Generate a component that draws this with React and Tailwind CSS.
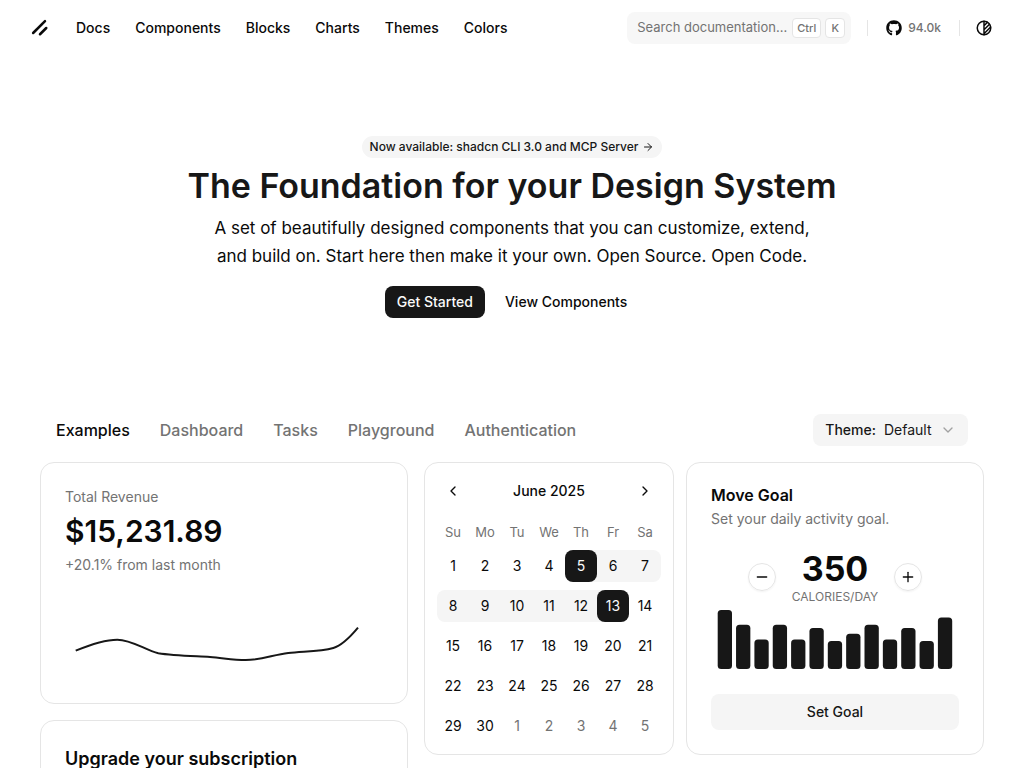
import { useState } from "react";
import { ArrowRight, ChevronDown, ChevronLeft, ChevronRight, Minus, Plus } from "lucide-react";
import { FaGithub } from "react-icons/fa";
import clsx from "clsx";

const NAV = ["Docs", "Components", "Blocks", "Charts", "Themes", "Colors"];
const TABS = ["Examples", "Dashboard", "Tasks", "Playground", "Authentication"];
const WEEKDAYS = ["Su", "Mo", "Tu", "We", "Th", "Fr", "Sa"];
const GOALS = [400, 300, 200, 300, 200, 278, 189, 239, 300, 200, 278, 189, 349];

// June 2025 starts on a Sunday, the last five cells belong to July
const WEEKS = [0, 1, 2, 3, 4].map((w) =>
  WEEKDAYS.map((_, d) => {
    const n = w * 7 + d + 1;
    return { n, label: n > 30 ? n - 30 : n, outside: n > 30 };
  })
);
const RANGE = { from: 5, to: 13 };

function Kbd({ children }) {
  return (
    <kbd className="h-5 px-1 flex items-center justify-center min-w-5 rounded border border-neutral-200 bg-white font-['Inter',sans-serif] text-[11px] font-medium text-neutral-500">
      {children}
    </kbd>
  );
}

function Header() {
  return (
    <header className="flex h-14 items-center px-6">
      <a href="#" aria-label="Home" className="flex size-8 items-center justify-center">
        <svg viewBox="0 0 256 256" className="size-5" fill="none" stroke="currentColor" strokeWidth="32" strokeLinecap="round">
          <line x1="208" y1="128" x2="128" y2="208" />
          <line x1="192" y1="40" x2="40" y2="192" />
        </svg>
      </a>
      <nav className="ml-2 flex items-center gap-px">
        {NAV.map((item) => (
          <a key={item} href="#" className="px-3 text-sm font-medium">
            {item}
          </a>
        ))}
      </nav>
      <div className="ml-auto flex items-center gap-2">
        <button className="mr-2 flex h-8 w-56 items-center justify-between rounded-lg bg-[#f7f7f7] pl-2.5 pr-1.5 text-[13px] text-neutral-500">
          <span className="whitespace-nowrap">Search documentation...</span>
          <span className="flex gap-1">
            <Kbd>Ctrl</Kbd>
            <Kbd>K</Kbd>
          </span>
        </button>
        <div className="h-4 w-px bg-neutral-200" />
        <a href="#" className="flex h-8 items-center gap-1.5 px-2.5 text-xs font-medium text-neutral-500">
          <FaGithub size={16} className="text-neutral-950" /> 94.0k
        </a>
        <div className="h-4 w-px bg-neutral-200" />
        <button aria-label="Toggle theme" className="flex size-8 items-center justify-center">
          <svg viewBox="0 0 24 24" className="size-[18px]" fill="none" stroke="currentColor" strokeWidth="2" strokeLinecap="round" strokeLinejoin="round">
            <circle cx="12" cy="12" r="9" />
            <path d="M12 3v18M12 9l4.65-4.65M12 14.3l7.37-7.37M12 19.6l8.85-8.85" />
          </svg>
        </button>
      </div>
    </header>
  );
}

function Hero() {
  return (
    <section className="flex flex-col items-center px-6 py-20 text-center">
      <a href="#" className="flex h-[22px] items-center gap-1 rounded-full bg-neutral-100 px-2 text-xs font-medium text-neutral-900">
        Now available: shadcn CLI 3.0 and MCP Server <ArrowRight size={12} />
      </a>
      <h1 className="mt-2 text-[34px] leading-10 font-semibold text-neutral-900">
        The Foundation for your Design System
      </h1>
      <p className="mt-2 max-w-[640px] text-[17px] leading-7 text-balance">
        A set of beautifully designed components that you can customize, extend, and build on.
        Start here then make it your own. Open Source. Open Code.
      </p>
      <div className="mt-4 flex gap-2 text-sm font-medium">
        <a href="#" className="flex h-8 items-center rounded-lg bg-neutral-900 px-3 text-neutral-50">
          Get Started
        </a>
        <a href="#" className="flex h-8 items-center rounded-lg px-3">
          View Components
        </a>
      </div>
    </section>
  );
}

function Toolbar() {
  return (
    <div className="flex items-center justify-between px-14 py-4">
      <nav className="flex gap-[30px] font-medium">
        {TABS.map((tab, i) => (
          <a key={tab} href="#" className={i === 0 ? "text-neutral-950" : "text-neutral-500"}>
            {tab}
          </a>
        ))}
      </nav>
      <div className="relative flex h-8 items-center rounded-lg bg-neutral-100 text-sm text-neutral-900">
        <label htmlFor="theme" className="pl-3 font-medium">
          Theme:
        </label>
        <select id="theme" className="h-8 appearance-none bg-transparent pl-2 pr-9 outline-none">
          <option>Default</option>
          <option>Blue</option>
          <option>Green</option>
        </select>
        <ChevronDown size={16} className="pointer-events-none absolute right-3 text-neutral-400" />
      </div>
    </div>
  );
}

function Card({ className, children }) {
  return (
    <div className={clsx("rounded-[14px] border border-neutral-200 bg-white", className)}>
      {children}
    </div>
  );
}

function RevenueCard() {
  return (
    <Card className="p-6">
      <p className="text-sm text-neutral-500">Total Revenue</p>
      <p className="mt-1 text-3xl leading-10 font-semibold">$15,231.89</p>
      <p className="mt-1 text-sm text-neutral-500">+20.1% from last month</p>
      <svg viewBox="0 0 318 80" className="mt-6 w-full" fill="none" stroke="#171717" strokeWidth="2">
        <path d="M10.7 51.7C25 45.7 38.3 40.7 52.3 40.7C66.7 40.7 80 51 93.3 54.3C108.3 56.7 126.7 57 145 58C158.3 59 168.3 61 180.7 61C196.7 61 208.3 55.7 223.3 54C238.3 52.3 255 52.7 268.3 49C276.7 46.7 285 38.3 293 28.7" />
      </svg>
    </Card>
  );
}

function CalendarCard() {
  return (
    <Card className="shrink-0 p-3">
      <div className="flex h-8 items-center justify-between">
        <button aria-label="Previous month" className="flex size-8 items-center justify-center">
          <ChevronLeft size={16} />
        </button>
        <span className="text-sm font-medium">June 2025</span>
        <button aria-label="Next month" className="flex size-8 items-center justify-center">
          <ChevronRight size={16} />
        </button>
      </div>
      <table className="mt-4 text-sm">
        <thead>
          <tr>
            {WEEKDAYS.map((d) => (
              <th key={d} className="p-0 text-[13px] leading-[19px] font-normal text-neutral-500">
                {d}
              </th>
            ))}
          </tr>
        </thead>
        <tbody>
          {WEEKS.map((week) => (
            <tr key={week[0].n}>
              {week.map(({ n, label, outside }, d) => {
                const edge = n === RANGE.from || n === RANGE.to;
                const inRange = n >= RANGE.from && n <= RANGE.to;
                return (
                  <td key={n} className="p-0 pt-2">
                    <div
                      className={clsx(
                        inRange && "bg-neutral-100",
                        (d === 0 || n === RANGE.from) && "rounded-l-lg",
                        (d === 6 || n === RANGE.to) && "rounded-r-lg"
                      )}
                    >
                      <button
                        className={clsx(
                          "flex size-8 items-center justify-center rounded-lg",
                          edge && "bg-neutral-900 text-neutral-50",
                          outside && "text-neutral-500"
                        )}
                      >
                        {label}
                      </button>
                    </div>
                  </td>
                );
              })}
            </tr>
          ))}
        </tbody>
      </table>
    </Card>
  );
}

function MoveGoalCard() {
  const [goal, setGoal] = useState(350);
  const round = "flex size-7 items-center justify-center rounded-full border border-neutral-200 shadow-xs";

  return (
    <Card className="flex min-w-0 flex-1 flex-col p-6">
      <h3 className="leading-4 font-semibold">Move Goal</h3>
      <p className="mt-1.5 text-sm text-neutral-500">Set your daily activity goal.</p>
      <div className="mt-5 flex items-center justify-center gap-4">
        <button aria-label="Decrease" className={round} onClick={() => setGoal(goal - 10)}>
          <Minus size={16} />
        </button>
        <div className="text-center">
          <div className="text-[34px] leading-10 font-bold">{goal}</div>
          <div className="text-xs text-neutral-500">CALORIES/DAY</div>
        </div>
        <button aria-label="Increase" className={round} onClick={() => setGoal(goal + 10)}>
          <Plus size={16} />
        </button>
      </div>
      <svg viewBox="0 0 248 59" className="mt-[5px] w-full" fill="#171717">
        {GOALS.map((g, i) => (
          <rect key={i} x={6.7 + i * 18.35} y={59 - g * 0.1475} width="14.3" height={g * 0.1475} rx="3.5" />
        ))}
      </svg>
      <button className="mt-auto h-9 w-full rounded-lg bg-neutral-100 text-sm font-medium text-neutral-900">
        Set Goal
      </button>
    </Card>
  );
}

export default function App() {
  return (
    <div className="h-screen overflow-hidden bg-white font-['Inter',sans-serif] text-neutral-950">
      <Header />
      <main>
        <Hero />
        <Toolbar />
        <div className="grid grid-cols-[23fr_35fr] gap-4 px-10">
          <div className="flex flex-col gap-4">
            <RevenueCard />
            <Card className="p-6">
              <h3 className="text-lg font-semibold">Upgrade your subscription</h3>
            </Card>
          </div>
          <div className="flex items-stretch gap-3 self-start">
            <CalendarCard />
            <MoveGoalCard />
          </div>
        </div>
      </main>
    </div>
  );
}
